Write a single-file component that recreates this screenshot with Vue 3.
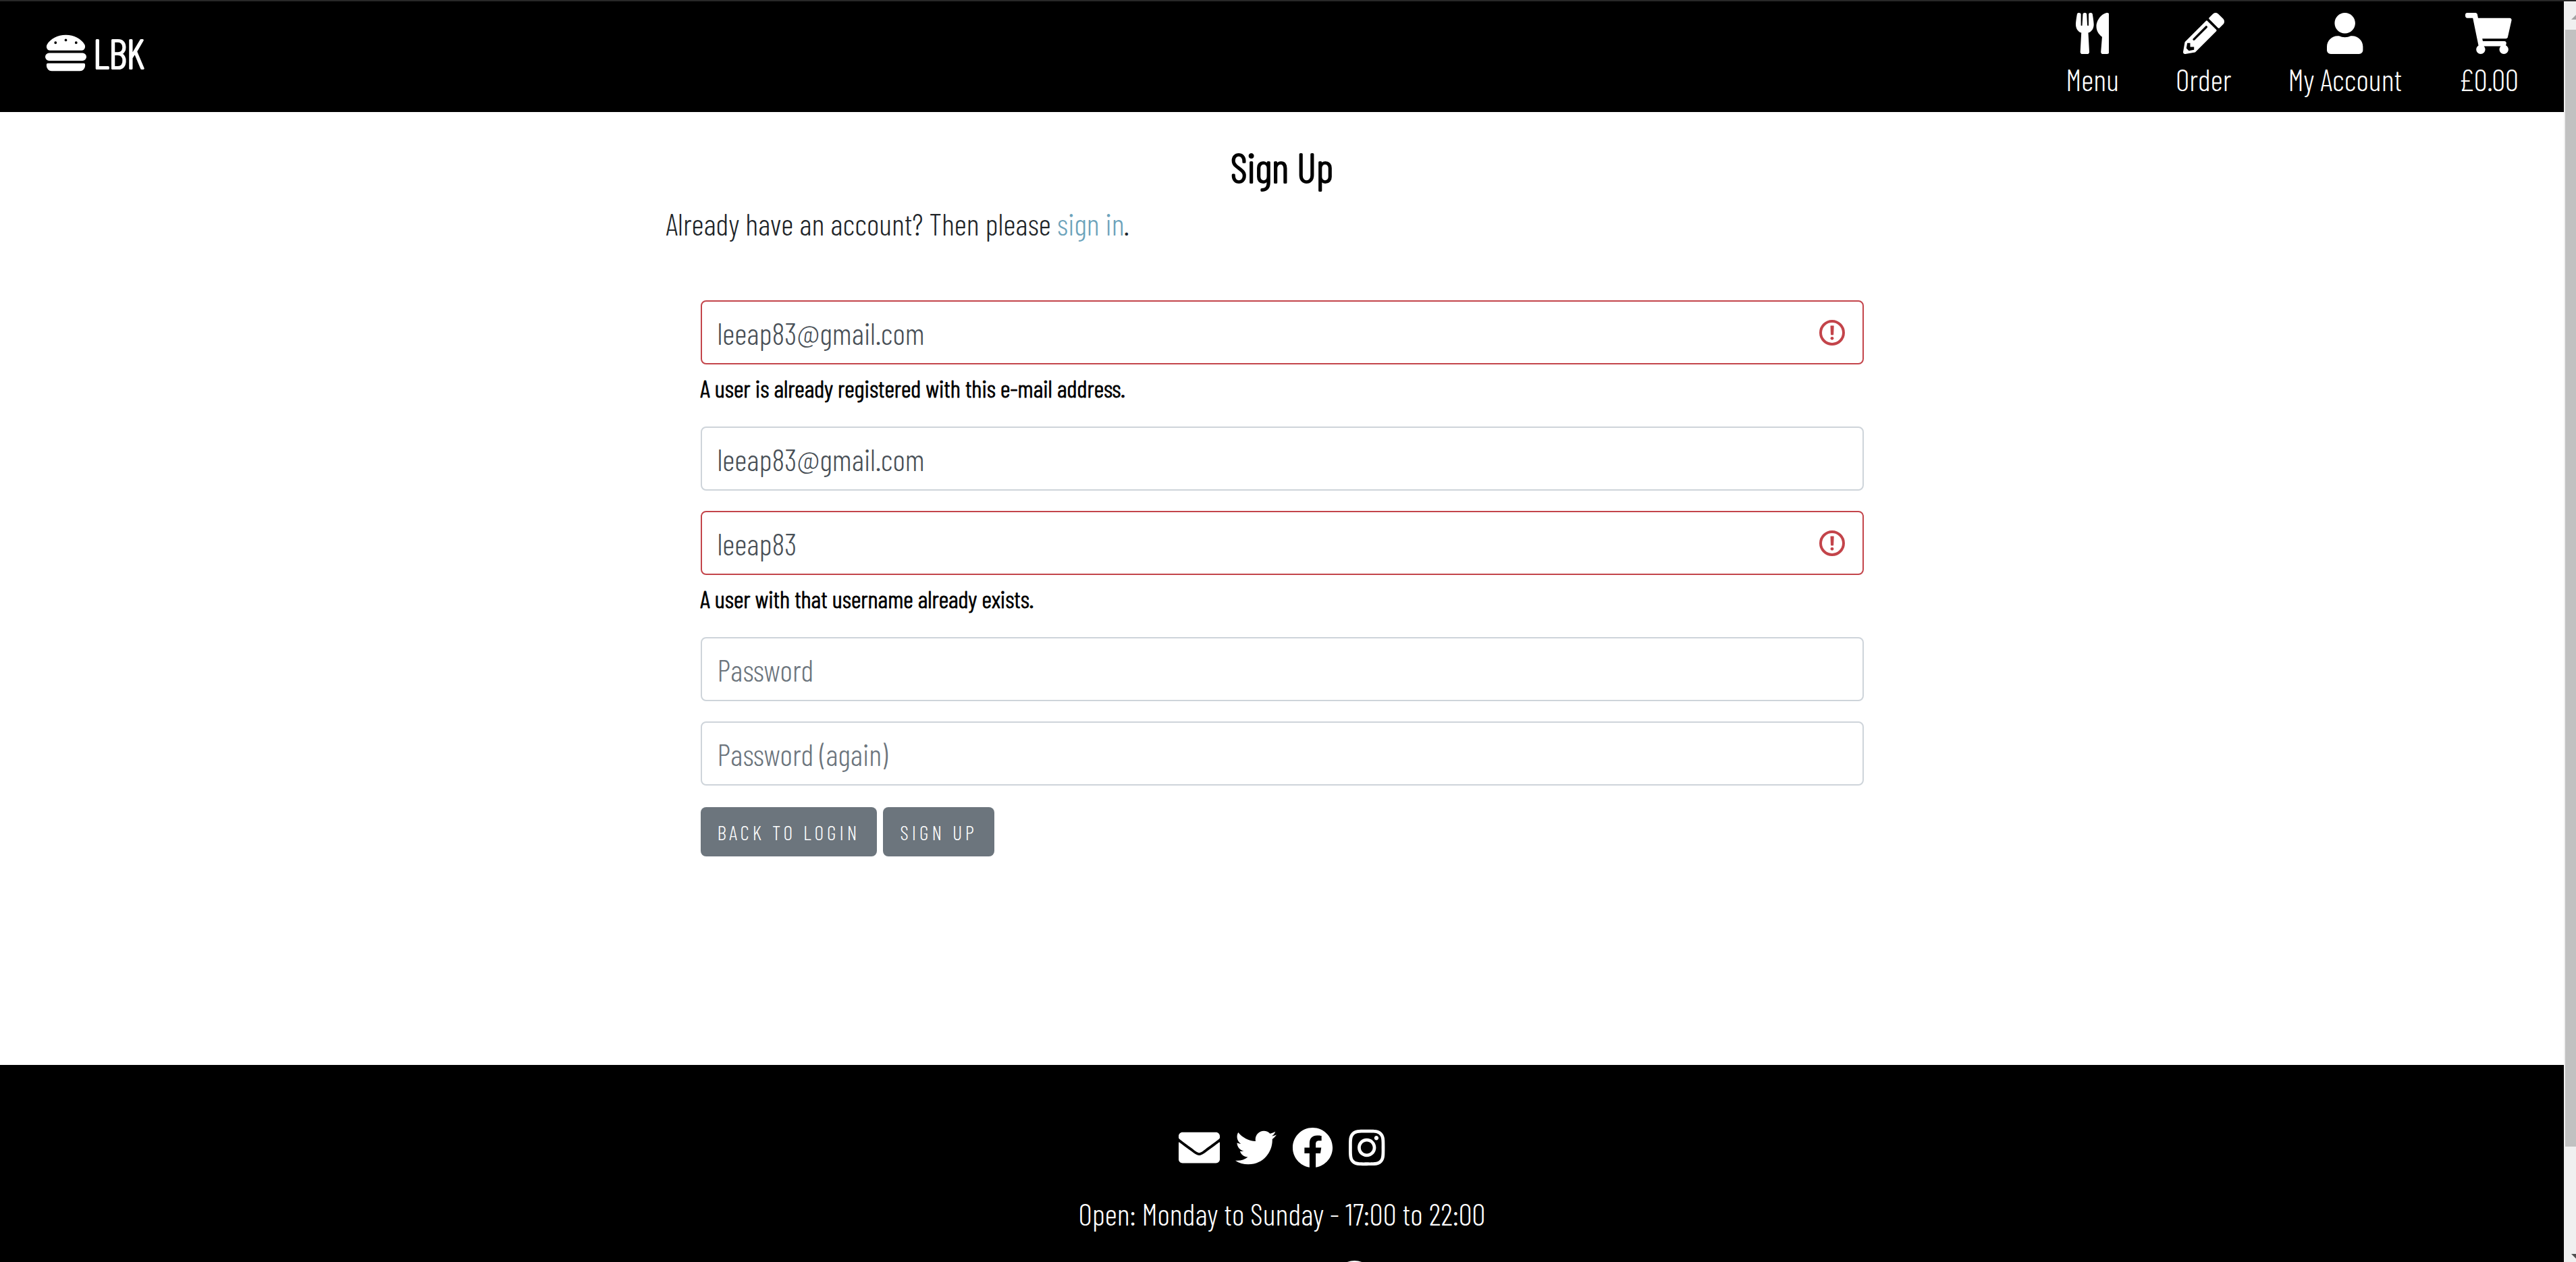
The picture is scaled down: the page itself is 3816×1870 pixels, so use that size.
<script setup>
import { ref } from 'vue'

const navItems = [
  {
    label: 'Menu',
    box: '0 0 416 512',
    path: 'M207.900 15.200c.8 4.700 16.100 94.500 16.100 128.800 0 52.300-27.800 89.600-68.900 104.600L168 486.700c.7 13.700-10.200 25.300-24 25.300H80c-13.700 0-24.700-11.500-24-25.300l12.900-238.100C27.700 233.600 0 196.200 0 144 0 109.600 15.300 19.900 16.100 15.200 19.300-5.100 61.400-5.400 64 16.300v141.200c1.300 3.400 15.100 3.200 16 0 1.400-25.300 7.900-139.200 8-141.800 3.300-20.800 44.700-20.800 47.900 0 .2 2.700 6.600 116.500 8 141.800.9 3.200 14.800 3.400 16 0V16.300c2.600-21.600 44.800-21.400 48-1.100zm119.200 285.700l-15 185.100c-1.200 14 9.900 26 23.900 26h56c13.300 0 24-10.700 24-24V24c0-13.200-10.700-24-24-24-82.500 0-221.400 178.500-64.900 300.900z'
  },
  {
    label: 'Order',
    box: '0 0 512 512',
    path: 'M497.900 142.100l-46.100 46.100c-4.700 4.700-12.300 4.700-17 0l-111-111c-4.700-4.700-4.700-12.300 0-17l46.100-46.100c18.700-18.700 49.100-18.700 67.900 0l60.100 60.100c18.800 18.700 18.800 49.100 0 67.900zM284.200 99.800L21.600 362.400.4 483.900c-2.900 16.400 11.400 30.600 27.800 27.800l121.500-21.300 262.600-262.600c4.700-4.700 4.700-12.300 0-17l-111-111c-4.800-4.700-12.400-4.700-17.100 0zM124.100 339.900c-5.500-5.500-5.500-14.300 0-19.800l154-154c5.500-5.500 14.300-5.500 19.800 0s5.500 14.300 0 19.800l-154 154c-5.500 5.500-14.300 5.500-19.800 0zM88 424h48v36.300l-64.500 11.300-31.100-31.100L51.700 376H88v48z'
  },
  {
    label: 'My Account',
    box: '0 0 448 512',
    path: 'M224 256c70.700 0 128-57.300 128-128S294.700 0 224 0 96 57.300 96 128s57.300 128 128 128zm89.600 32h-16.700c-22.200 10.200-46.900 16-72.900 16s-50.600-5.800-72.900-16h-16.700C60.200 288 0 348.200 0 422.400V464c0 26.500 21.500 48 48 48h352c26.500 0 48-21.500 48-48v-41.600c0-74.200-60.200-134.400-134.400-134.400z'
  },
  {
    label: '£0.00',
    box: '0 0 576 512',
    path: 'M528.120 301.319l47.273-208C578.806 78.301 567.391 64 551.990 64H159.208l-9.166-44.810C147.758 8.021 137.930 0 126.529 0H24C10.745 0 0 10.745 0 24v16c0 13.255 10.745 24 24 24h69.883l70.248 343.435C147.325 417.100 136 435.222 136 456c0 30.928 25.072 56 56 56s56-25.072 56-56c0-15.674-6.447-29.835-16.824-40h209.647C430.447 426.165 424 440.326 424 456c0 30.928 25.072 56 56 56s56-25.072 56-56c0-22.172-12.888-41.332-31.579-50.405l5.517-24.276c3.413-15.018-8.002-29.319-23.403-29.319H218.117l-6.545-32h293.145c11.206 0 20.920-7.754 23.403-18.681z'
  }
]

const socials = [
  {
    label: 'E-mail',
    box: '0 0 512 512',
    path: 'M502.300 190.800c3.900-3.100 9.700-.2 9.700 4.700V400c0 26.500-21.500 48-48 48H48c-26.500 0-48-21.500-48-48V195.600c0-5 5.700-7.800 9.700-4.700 22.400 17.400 52.100 39.500 154.100 113.600 21.100 15.400 56.700 47.800 92.200 47.600 35.700.3 72-32.800 92.300-47.600 102-74.100 131.600-96.300 154-113.700zM256 320c23.200.4 56.600-29.200 73.400-41.400 132.700-96.300 142.800-104.700 173.400-128.700 5.800-4.500 9.200-11.500 9.200-18.900v-19c0-26.500-21.500-48-48-48H48c-26.500 0-48 21.500-48 48v19c0 7.400 3.400 14.300 9.200 18.900 30.600 23.900 40.700 32.400 173.400 128.700 16.800 12.200 50.200 41.800 73.400 41.400z'
  },
  {
    label: 'Twitter',
    box: '0 0 512 512',
    path: 'M459.370 151.716c.325 4.548.325 9.097.325 13.645 0 138.720-105.583 298.558-298.558 298.558-59.452 0-114.680-17.219-161.137-47.106 8.447.974 16.568 1.299 25.340 1.299 49.055 0 94.213-16.568 130.274-44.832-46.132-.975-84.792-31.188-98.112-72.772 6.498.974 12.995 1.624 19.818 1.624 9.421 0 18.843-1.300 27.614-3.573-48.081-9.747-84.143-51.980-84.143-102.985v-1.299c13.969 7.797 30.214 12.670 47.431 13.319-28.264-18.843-46.781-51.005-46.781-87.391 0-19.492 5.197-37.360 14.294-52.954 51.655 63.675 129.300 105.258 216.365 109.807-1.624-7.797-2.599-15.918-2.599-24.040 0-57.828 46.782-104.934 104.934-104.934 30.213 0 57.502 12.670 76.670 33.137 23.715-4.548 46.456-13.320 66.599-25.340-7.798 24.366-24.366 44.833-46.132 57.827 21.117-2.273 41.584-8.122 60.426-16.243-14.292 20.791-32.161 39.308-52.628 54.253z'
  },
  {
    label: 'Facebook',
    box: '0 0 512 512',
    path: 'M504 256C504 119 393 8 256 8S8 119 8 256c0 123.780 90.690 226.380 209.250 245V327.690h-63V256h63v-54.640c0-62.150 37-96.480 93.670-96.480 27.140 0 55.520 4.840 55.520 4.840v61h-31.280c-30.800 0-40.410 19.120-40.410 38.730V256h68.780l-11 71.690h-57.780V501C413.310 482.380 504 379.780 504 256z'
  },
  {
    label: 'Instagram',
    box: '0 0 448 512',
    path: 'M224.100 141c-63.600 0-114.900 51.300-114.900 114.900s51.300 114.900 114.900 114.900S339 319.500 339 255.900 287.700 141 224.100 141zm0 189.600c-41.100 0-74.700-33.500-74.700-74.700s33.500-74.700 74.700-74.700 74.700 33.500 74.700 74.700-33.600 74.700-74.700 74.700zm146.400-194.300c0 14.900-12 26.800-26.800 26.800-14.900 0-26.800-12-26.800-26.800s12-26.800 26.800-26.800 26.800 12 26.800 26.800zm76.100 27.200c-1.700-35.900-9.900-67.700-36.200-93.900-26.200-26.200-58-34.400-93.900-36.200-37-2.100-147.900-2.100-184.900 0-35.800 1.700-67.600 9.900-93.900 36.100s-34.400 58-36.200 93.900c-2.100 37-2.100 147.900 0 184.900 1.700 35.900 9.900 67.700 36.200 93.900s58 34.400 93.900 36.200c37 2.100 147.900 2.100 184.900 0 35.900-1.700 67.700-9.900 93.900-36.200 26.200-26.200 34.400-58 36.200-93.900 2.100-37 2.100-147.800 0-184.800zM398.800 388c-7.800 19.600-22.900 34.700-42.600 42.600-29.500 11.700-99.500 9-132.100 9s-102.700 2.600-132.100-9c-19.600-7.800-34.700-22.900-42.600-42.600-11.700-29.500-9-99.500-9-132.100s-2.600-102.700 9-132.100c7.800-19.600 22.900-34.700 42.600-42.600 29.500-11.700 99.500-9 132.100-9s102.700-2.600 132.100 9c19.600 7.800 34.700 22.900 42.600 42.600 11.700 29.500 9 99.500 9 132.100s2.700 102.700-9 132.100z'
  }
]

const fields = ref([
  { id: 'email', label: 'E-mail address', type: 'email', value: 'leeap83@gmail.com', error: 'A user is already registered with this e-mail address.' },
  { id: 'email2', label: 'E-mail address confirmation', type: 'email', value: 'leeap83@gmail.com' },
  { id: 'username', label: 'Username', type: 'text', value: 'leeap83', error: 'A user with that username already exists.' },
  { id: 'password1', label: 'Password', type: 'password', value: '' },
  { id: 'password2', label: 'Password (again)', type: 'password', value: '' }
])
</script>

<template>
  <div class="window">
    <div class="page">
      <header class="header">
        <a class="brand" href="#">
          <svg class="icon" viewBox="0 0 512 512" aria-hidden="true">
            <path d="M464 256H48a48 48 0 0 0 0 96h416a48 48 0 0 0 0-96zm16 128H32a16 16 0 0 0-16 16v16a64 64 0 0 0 64 64h352a64 64 0 0 0 64-64v-16a16 16 0 0 0-16-16zM58.640 224h394.720c34.570 0 54.620-43.900 34.820-75.880C448 83.200 359.550 32.100 256 32c-103.540.1-192 51.200-232.180 116.110C4 180.090 24.070 224 58.640 224zM384 112a16 16 0 1 1-16 16 16 16 0 0 1 16-16zM256 80a16 16 0 1 1-16 16 16 16 0 0 1 16-16zm-128 32a16 16 0 1 1-16 16 16 16 0 0 1 16-16z" />
          </svg>
          <span>LBK</span>
        </a>
        <nav class="nav">
          <a v-for="item in navItems" :key="item.label" class="nav-item" href="#">
            <svg class="icon" :viewBox="item.box" aria-hidden="true"><path :d="item.path" /></svg>
            <span>{{ item.label }}</span>
          </a>
        </nav>
      </header>

      <main class="main">
        <h1 class="title">Sign Up</h1>
        <p class="intro">Already have an account? Then please <a href="#">sign in</a>.</p>
        <form class="form" novalidate @submit.prevent>
          <div v-for="field in fields" :key="field.id" class="field">
            <div class="control">
              <input
                :id="field.id"
                v-model="field.value"
                :type="field.type"
                :placeholder="field.label"
                :aria-label="field.label"
                :class="{ invalid: field.error }"
              />
              <svg v-if="field.error" class="warning" viewBox="0 0 38 38" aria-hidden="true">
                <circle cx="19" cy="19" r="17" fill="none" stroke="currentColor" stroke-width="4" />
                <path d="M17 8.500h4.200q.5 0 .5.500l-.5 12.500q0 1-1 1h-2.200q-1 0-1-1L16.500 9q0-.5.500-.5z" fill="currentColor" />
                <circle cx="19" cy="27.300" r="2.400" fill="currentColor" />
              </svg>
            </div>
            <p v-if="field.error" class="error">{{ field.error }}</p>
          </div>
          <div class="actions">
            <button type="button">Back to login</button>
            <button type="submit">Sign up</button>
          </div>
        </form>
      </main>

      <footer class="footer">
        <div class="socials">
          <a v-for="s in socials" :key="s.label" href="#" :aria-label="s.label">
            <svg class="icon" :viewBox="s.box" aria-hidden="true"><path :d="s.path" /></svg>
          </a>
        </div>
        <p class="hours">Open: Monday to Sunday - 17:00 to 22:00</p>
        <div class="credit">
          <svg class="icon" viewBox="0 0 512 512" aria-hidden="true"><circle cx="256" cy="256" r="248" /></svg>
        </div>
      </footer>
    </div>

    <div class="scrollbar" aria-hidden="true">
      <span class="arrow up"></span>
      <span class="thumb"></span>
      <span class="arrow down"></span>
    </div>
  </div>
</template>

<style>
body {
  margin: 0;
}
</style>

<style scoped>
.window {
  display: flex;
  box-sizing: border-box;
  height: 100vh;
  overflow: hidden;
  border-top: 2px solid #282828;
  background: #fff;
  color: #212529;
  font-family: 'Barlow Condensed', 'Roboto Condensed', 'Roboto', sans-serif;
  font-size: 45px;
  font-weight: 300;
  line-height: 68px;
}

.page {
  display: flex;
  flex-direction: column;
  flex: 1;
  min-width: 0;
}

p,
h1 {
  margin: 0;
}

a {
  color: #6ca3bb;
  text-decoration: none;
}

.icon {
  display: block;
  height: 61px;
  fill: #fff;
}

.header {
  display: flex;
  justify-content: space-between;
  padding: 17px 67px 15px;
  background: #000;
}

.header a {
  color: #fff;
}

.brand {
  display: flex;
  align-items: center;
  gap: 10px;
  height: 118px;
  font-size: 60px;
  line-height: 76px;
  -webkit-text-stroke: 2px currentColor;
}

.nav {
  display: flex;
  gap: 84px;
}

.nav-item {
  display: flex;
  flex-direction: column;
  align-items: center;
  gap: 3px;
}

.main {
  box-sizing: border-box;
  width: 50%;
  margin: 0 auto;
  padding: 43px 37px 309px;
}

.title {
  margin-bottom: 12px;
  color: #000;
  font-size: 60px;
  font-weight: 300;
  line-height: 76px;
  text-align: center;
  -webkit-text-stroke: 2px currentColor;
}

.form {
  display: flex;
  flex-direction: column;
  gap: 30px;
  padding: 80px 51px 0;
}

.control {
  display: flex;
  align-items: center;
  position: relative;
}

.control input {
  box-sizing: border-box;
  width: 100%;
  height: 95px;
  padding: 0 23px;
  border: 2px solid #ced4da;
  border-radius: 8px;
  outline: none;
  background: #fff;
  color: #495057;
  font: inherit;
}

.control input::placeholder {
  color: #6c757d;
  opacity: 1;
}

.control input.invalid {
  padding-right: 96px;
  border-color: #c3444a;
}

.warning {
  position: absolute;
  right: 28px;
  width: 38px;
  height: 38px;
  color: #c3444a;
}

.error {
  margin-top: 8px;
  color: #000;
  font-size: 36px;
  line-height: 54px;
  -webkit-text-stroke: 1px currentColor;
}

.actions {
  display: flex;
  gap: 9px;
  padding-top: 2px;
}

.actions button {
  height: 73px;
  padding: 0 25px;
  border: 0;
  border-radius: 8px;
  background: #6c757d;
  color: #fff;
  font: inherit;
  font-size: 30px;
  letter-spacing: 5px;
  text-transform: uppercase;
}

.footer {
  flex: 1 0 auto;
  padding-top: 92px;
  background: #000;
  color: #fff;
}

.socials {
  display: flex;
  justify-content: center;
  gap: 23px;
}

.hours {
  margin: 33px 0 35px;
  text-align: center;
}

.credit {
  display: flex;
  justify-content: center;
  padding-left: 214px;
}

.scrollbar {
  display: flex;
  flex-direction: column;
  justify-content: space-between;
  align-items: flex-end;
  flex: 0 0 18px;
  overflow: hidden;
  background: #f0f0f0;
}

.thumb {
  flex: 1;
  width: 16px;
  margin: 15px 0 159px;
  background: #c1c1c1;
}

.arrow {
  width: 7px;
  height: 7px;
}

.arrow.up {
  margin-top: 20px;
  background: #a3a3a3;
  clip-path: polygon(100% 0, 100% 100%, 0 100%);
}

.arrow.down {
  margin-bottom: 5px;
  background: #505050;
  clip-path: polygon(0 0, 100% 0, 100% 100%);
}
</style>
